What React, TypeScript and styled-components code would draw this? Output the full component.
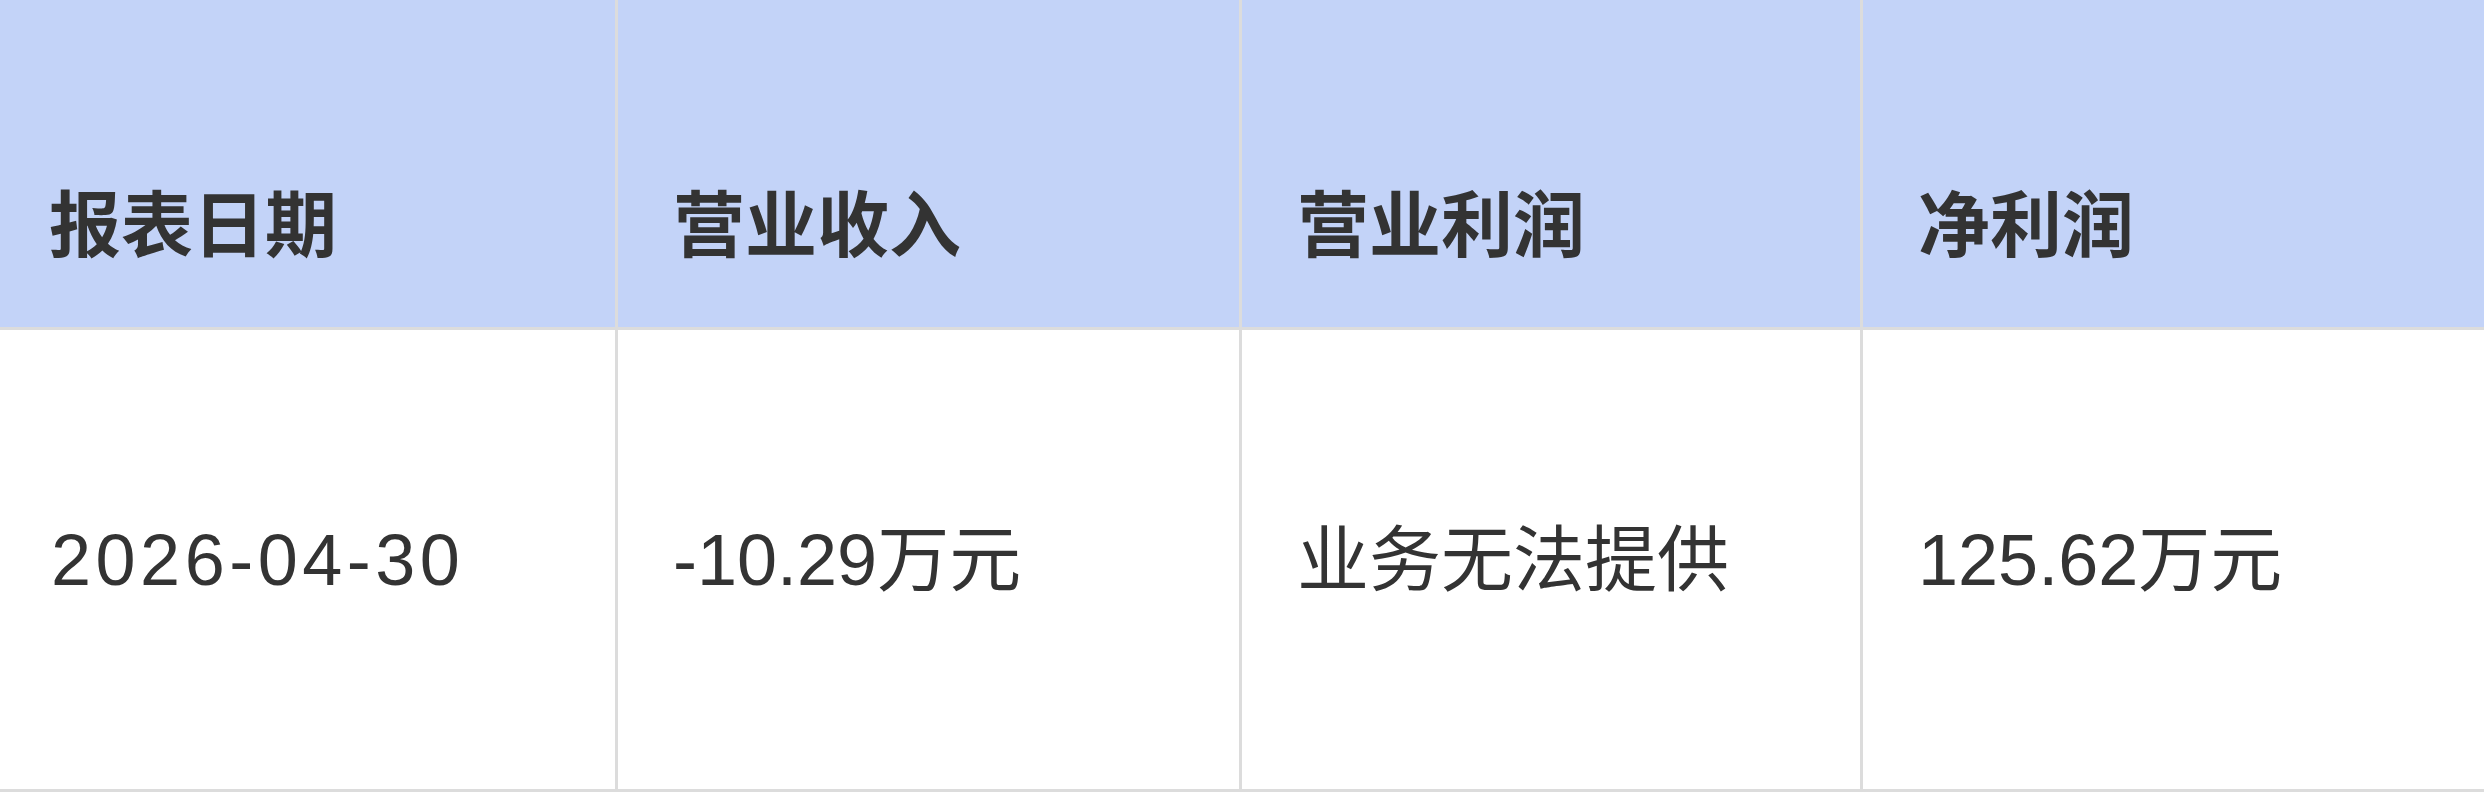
import React from "react";
import styled, { createGlobalStyle } from "styled-components";

interface Row {
  date: string;
  revenue: string;
  operatingProfit: string;
  netProfit: string;
}

const GlobalStyle = createGlobalStyle`
  html, body {
    margin: 0;
    padding: 0;
    background: #ffffff;
  }
  body {
    font-family: "Liberation Sans", "Noto Sans CJK SC", sans-serif;
    color: #333333;
  }
`;

const Table = styled.div`
  display: grid;
  grid-template-columns: 615px 621px 618px 1fr;
  grid-template-rows: 327px 459px;
  gap: 3px;
  padding-bottom: 3px;
  width: 100%;
  background-color: #dcdcdc;
`;

const HeadCell = styled.div`
  display: flex;
  align-items: flex-end;
  padding: 0 0 65px 55px;
  background-color: #c3d3f8;
  font-size: 72px;
  line-height: 1;
  font-weight: 700;
  color: #333333;
  white-space: nowrap;

  &:first-child {
    padding-left: 49px;
  }
`;

const BodyCell = styled.div<{ $wide?: boolean }>`
  display: flex;
  align-items: center;
  padding-left: 55px;
  background-color: #ffffff;
  font-size: 72px;
  line-height: 1;
  color: #333333;
  white-space: nowrap;
  letter-spacing: ${({ $wide }) => ($wide ? "4.5px" : "0")};

  &:nth-child(4n + 1) {
    padding-left: 51px;
  }
`;

const columns = ["报表日期", "营业收入", "营业利润", "净利润"];

const rows: Row[] = [
  {
    date: "2026-04-30",
    revenue: "-10.29万元",
    operatingProfit: "业务无法提供",
    netProfit: "125.62万元",
  },
];

const App: React.FC = () => {
  return (
    <>
      <GlobalStyle />
      <Table role="table">
        {columns.map((title) => (
          <HeadCell key={title} role="columnheader">
            {title}
          </HeadCell>
        ))}
        {rows.map((row) => (
          <React.Fragment key={row.date}>
            <BodyCell $wide role="cell">
              {row.date}
            </BodyCell>
            <BodyCell role="cell">{row.revenue}</BodyCell>
            <BodyCell role="cell">{row.operatingProfit}</BodyCell>
            <BodyCell role="cell">{row.netProfit}</BodyCell>
          </React.Fragment>
        ))}
      </Table>
    </>
  );
};

export default App;
